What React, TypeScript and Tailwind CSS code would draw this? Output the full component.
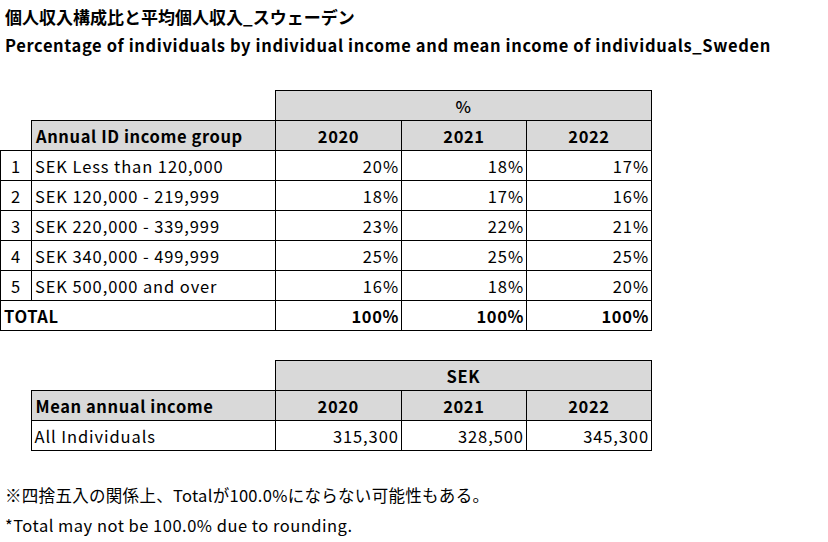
const ROWS = [
  { no: 1, label: "SEK Less than 120,000", vals: ["20%", "18%", "17%"] },
  { no: 2, label: "SEK 120,000 - 219,999", vals: ["18%", "17%", "16%"] },
  { no: 3, label: "SEK 220,000 - 339,999", vals: ["23%", "22%", "21%"] },
  { no: 4, label: "SEK 340,000 - 499,999", vals: ["25%", "25%", "25%"] },
  { no: 5, label: "SEK 500,000 and over", vals: ["16%", "18%", "20%"] },
];

const YEARS = ["2020", "2021", "2022"];
const MEAN = ["315,300", "328,500", "345,300"];

const cell = "border border-black h-[30px] p-0 tracking-[0.9px]";
const head = "border border-black h-[30px] p-0 bg-[#d9d9d9] font-bold text-center tracking-[0.6px]";

const Cols = () => (
  <colgroup>
    <col className="w-[31px]" />
    <col className="w-[244px]" />
    <col className="w-[126px]" />
    <col className="w-[125px]" />
    <col className="w-[125px]" />
  </colgroup>
);

export default function App() {
  return (
    <div className="w-[828px] h-[542px] bg-white text-black font-['Noto_Sans_CJK_JP',sans-serif] text-[16.5px] leading-[20px] overflow-hidden">
      <div className="pt-[6px] pl-[5px] flex flex-col gap-[8px] font-bold">
        <div className="text-[17px] leading-[21px]">個人収入構成比と平均個人収入_スウェーデン</div>
        <div className="tracking-[0.63px]">Percentage of individuals by individual income and mean income of individuals_Sweden</div>
      </div>

      <table className="mt-[35px] table-fixed border-collapse w-[652px]">
        <Cols />
        <tbody>
          <tr>
            <td className="h-[30px] p-0" colSpan={2} />
            <td className={`${head} font-medium`} colSpan={3}>%</td>
          </tr>
          <tr>
            <td className="h-[30px] p-0" />
            <td className={`${head} text-left pl-[4px]`}>Annual ID income group</td>
            {YEARS.map((y) => (
              <td key={y} className={head}>{y}</td>
            ))}
          </tr>
          {ROWS.map((r) => (
            <tr key={r.no}>
              <td className={`${cell} text-center`}>{r.no}</td>
              <td className={`${cell} pl-[3px]`}>{r.label}</td>
              {r.vals.map((v, i) => (
                <td key={i} className={`${cell} text-right pr-[2px]`}>{v}</td>
              ))}
            </tr>
          ))}
          <tr>
            <td className={`${head} bg-white text-left pl-[3px]`} colSpan={2}>TOTAL</td>
            {YEARS.map((y) => (
              <td key={y} className={`${head} bg-white text-right pr-[2px]`}>100%</td>
            ))}
          </tr>
        </tbody>
      </table>

      <table className="mt-[29px] table-fixed border-collapse w-[652px]">
        <Cols />
        <tbody>
          <tr>
            <td className="h-[30px] p-0" colSpan={2} />
            <td className={head} colSpan={3}>SEK</td>
          </tr>
          <tr>
            <td className="h-[30px] p-0" />
            <td className={`${head} text-left pl-[4px]`}>Mean annual income</td>
            {YEARS.map((y) => (
              <td key={y} className={head}>{y}</td>
            ))}
          </tr>
          <tr>
            <td className="h-[30px] p-0" />
            <td className={`${cell} pl-[3px]`}>All Individuals</td>
            {MEAN.map((v, i) => (
              <td key={i} className={`${cell} text-right pr-[2px]`}>{v}</td>
            ))}
          </tr>
        </tbody>
      </table>

      <div className="mt-[34px] pl-[5px] flex flex-col gap-[10px]">
        <div className="tracking-[0.3px]">※四捨五入の関係上、Totalが100.0%にならない可能性もある。</div>
        <div className="tracking-[0.5px]">*Total may not be 100.0% due to rounding.</div>
      </div>
    </div>
  );
}
